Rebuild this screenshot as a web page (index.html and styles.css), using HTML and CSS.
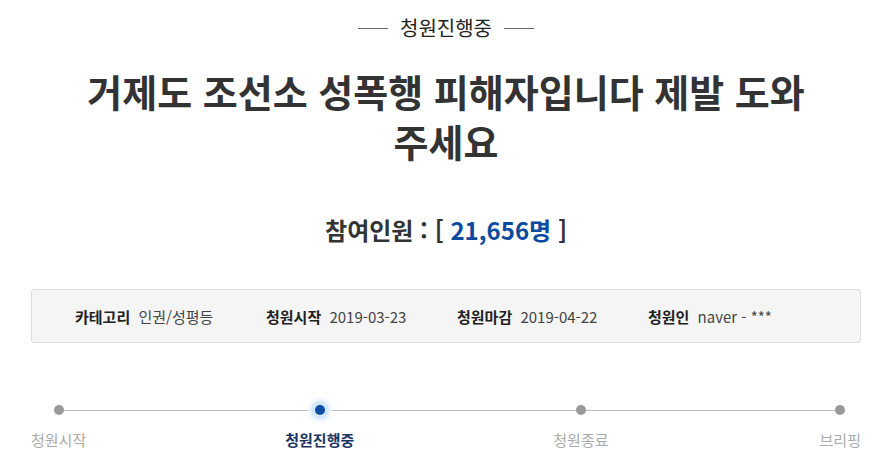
FILE: index.html
```html
<!DOCTYPE html>
<html lang="ko">
<head>
    <meta charset="UTF-8">
    <meta name="viewport" content="width=device-width, initial-scale=1.0">
    <title>청원진행중</title>
    <link rel="stylesheet" href="styles.css">
</head>
<body>
<div class="petition">
    <div class="status"><span class="status-text">청원진행중</span></div>
    <h1 class="title">거제도 조선소 성폭행 피해자입니다 제발 도와 주세요</h1>
    <h2 class="count">참여인원 : [ <span class="count-num">21,656명</span> ]</h2>

    <ul class="info">
        <li><b>카테고리</b> 인권/성평등</li>
        <li><b>청원시작</b> 2019-03-23</li>
        <li><b>청원마감</b> 2019-04-22</li>
        <li><b>청원인</b> naver - ***</li>
    </ul>

    <ol class="steps">
        <li class="step"><span class="dot"></span><span class="label">청원시작</span></li>
        <li class="step on"><span class="dot"></span><span class="label">청원진행중</span></li>
        <li class="step end"><span class="dot"></span><span class="label">청원종료</span></li>
        <li class="step"><span class="dot"></span><span class="label">브리핑</span></li>
    </ol>
</div>
</body>
</html>
```

FILE: styles.css
```css
body {
    margin: 0;
    background: #fff;
    color: #333;
    font-family: "Noto Sans CJK KR", "Noto Sans", sans-serif;
}
.petition {
    padding: 0 31px;
}
.status {
    margin-top: 14px;
    display: flex;
    justify-content: center;
    align-items: center;
    font-size: 20px;
    line-height: 28px;
    color: #222;
}
.status::before,
.status::after {
    content: "";
    width: 30px;
    height: 1px;
    background: #666;
    margin: 0 12px;
}
.title {
    margin: 24px auto 0;
    max-width: 760px;
    text-align: center;
    font-size: 38px;
    line-height: 50px;
    font-weight: bold;
    color: #333;
}
.count {
    margin: 47px 0 0;
    text-align: center;
    font-size: 24px;
    line-height: 34px;
    font-weight: bold;
    color: #333;
}
.count-num {
    color: #0b4a9e;
}
.info {
    list-style: none;
    margin: 42px 0 0;
    padding: 0 0 0 43px;
    height: 52px;
    border: 1px solid #ddd;
    border-radius: 3px;
    background: #f5f5f5;
    display: grid;
    grid-template-columns: repeat(4, 191px);
    align-items: center;
    font-size: 15px;
    color: #444;
    white-space: nowrap;
}
.info b {
    color: #222;
    margin-right: 4px;
}
.steps {
    list-style: none;
    margin: 62px 0 0;
    padding: 0;
    display: flex;
    justify-content: space-between;
    position: relative;
}
.steps::before {
    content: "";
    position: absolute;
    left: 27px;
    right: 20px;
    top: 5px;
    height: 1px;
    background: #bbb;
}
.step {
    display: flex;
    flex-direction: column;
    align-items: center;
    gap: 14px;
    position: relative;
}
.step.end {
    margin-right: 12px;
}
.dot {
    width: 10px;
    height: 10px;
    border-radius: 50%;
    background: #999;
}
.step.on .dot {
    background: #0b4ea2;
    box-shadow: 0 0 0 4px #d3e6fb, 0 0 3px 7px #eef6fe;
}
.label {
    font-size: 15px;
    line-height: 22px;
    color: #aaa;
}
.step.on .label {
    color: #1c3560;
    font-weight: bold;
}
```
